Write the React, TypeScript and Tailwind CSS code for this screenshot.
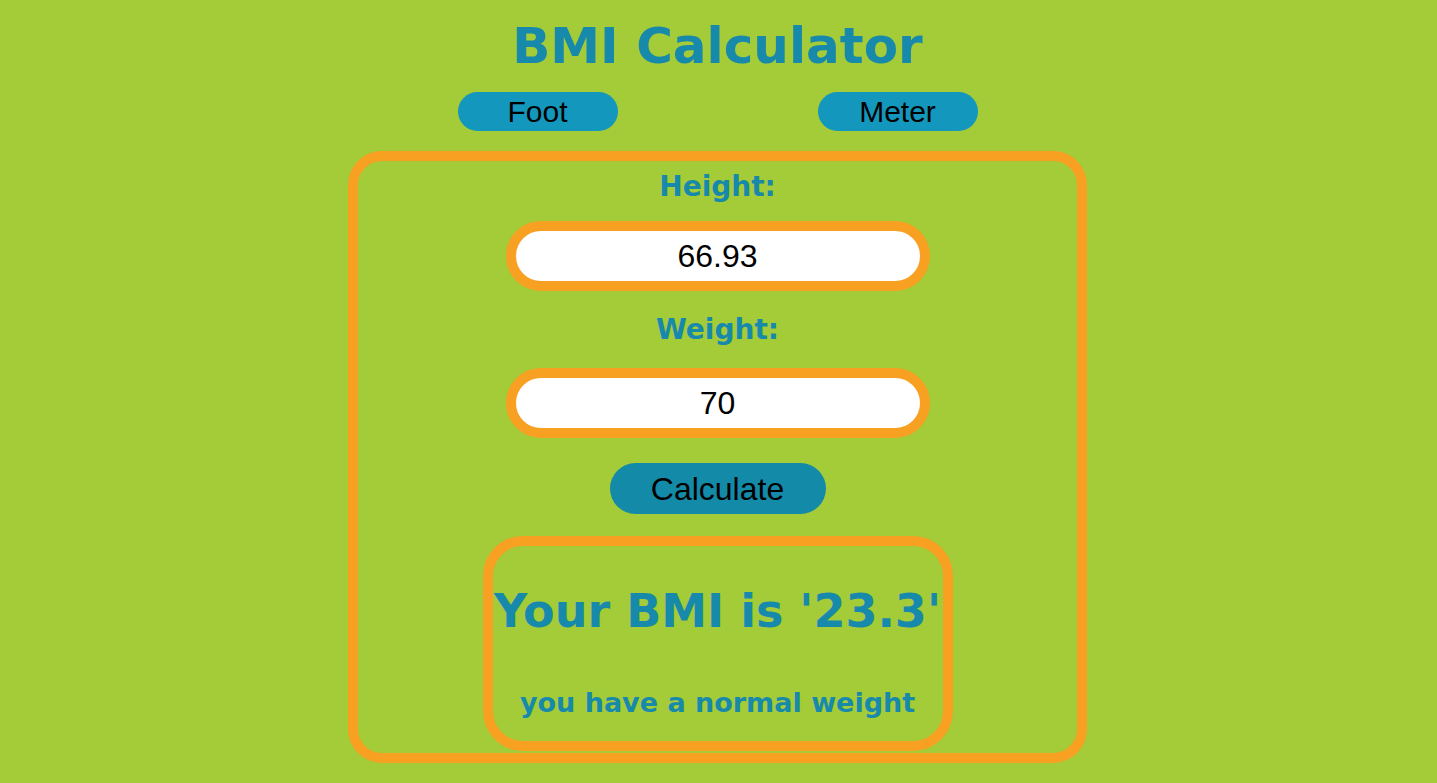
import React from "react";

const comic = { fontFamily: '"Comic Sans MS", "DejaVu Sans", sans-serif' };

export default function App() {
  return (
    <div className="min-h-screen w-full bg-[#a4cb38] flex flex-col items-center pr-[2px]" style={{ minHeight: 783 }}>
      <h1
        className="h-[92px] flex items-center justify-center font-bold text-[#1789ab] text-[50px] leading-none"
        style={comic}
      >
        BMI Calculator
      </h1>
      <div className="flex gap-[200px] font-['Liberation_Sans',Arial,sans-serif]">
        <button className="w-[160px] h-[39px] rounded-full bg-[#1497bd] text-black text-[30px] leading-none">
          Foot
        </button>
        <button className="w-[160px] h-[39px] rounded-full bg-[#1497bd] text-black text-[30px] leading-none">
          Meter
        </button>
      </div>
      <div className="mt-[20px] w-[739px] h-[612px] border-[10px] border-[#f7a021] rounded-[34px] flex flex-col items-center">
        <div
          className="h-[60px] flex items-center justify-center font-bold text-[#1789ab] text-[28px] leading-none pb-[8px]"
          style={comic}
        >
          Height:
        </div>
        <div className="w-[424px] h-[70px] border-[10px] border-[#f7a021] rounded-full bg-white flex items-center justify-center text-[32px] text-black font-['Liberation_Sans',Arial,sans-serif]">
          66.93
        </div>
        <div
          className="h-[77px] flex items-center justify-center font-bold text-[#1789ab] text-[28px] leading-none"
          style={comic}
        >
          Weight:
        </div>
        <div className="w-[424px] h-[70px] border-[10px] border-[#f7a021] rounded-full bg-white flex items-center justify-center text-[32px] text-black font-['Liberation_Sans',Arial,sans-serif]">
          70
        </div>
        <button className="mt-[25px] w-[216px] h-[51px] rounded-full bg-[#138aa8] text-black text-[32px] leading-none font-['Liberation_Sans',Arial,sans-serif]">
          Calculate
        </button>
        <div className="mt-[22px] w-[470px] h-[215px] border-[10px] border-[#f7a021] rounded-[40px] flex flex-col items-center">
          <div
            className="mt-[42px] font-bold text-[#1789ab] text-[46px] leading-none whitespace-nowrap"
            style={comic}
          >
            Your BMI is '23.3'
          </div>
          <div
            className="mt-[55px] font-bold text-[#1789ab] text-[27px] leading-none whitespace-nowrap"
            style={comic}
          >
            you have a normal weight
          </div>
        </div>
      </div>
    </div>
  );
}
